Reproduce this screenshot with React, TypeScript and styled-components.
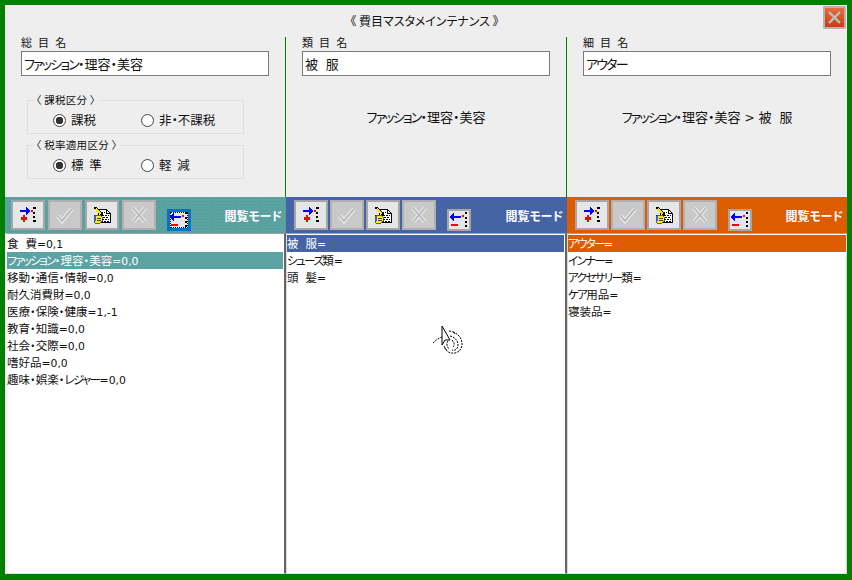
import styled, { createGlobalStyle } from 'styled-components'

const Jp = `"Noto Sans CJK JP", "Liberation Sans", sans-serif`

const GlobalStyle = createGlobalStyle`
  html, body {
    margin: 0;
    padding: 0;
    background: #008000;
  }
  * {
    box-sizing: border-box;
  }
`

const columns = [
  {
    label: '総 目 名',
    value: 'ファッション・理容・美容',
    path: '',
    color: '#5ba3a3',
    selected: 1,
    items: ['食  費=0,1', 'ファッション・理容・美容=0,0', '移動・通信・情報=0,0', '耐久消費財=0,0', '医療・保険・健康=1,-1', '教育・知識=0,0', '社会・交際=0,0', '嗜好品=0,0', '趣味・娯楽・レジャー=0,0'],
  },
  {
    label: '類 目 名',
    value: '被  服',
    path: 'ファッション・理容・美容',
    color: '#4464a6',
    selected: 0,
    items: ['被  服=', 'シューズ類=', '頭  髪='],
  },
  {
    label: '細 目 名',
    value: 'アウター',
    path: 'ファッション・理容・美容 > 被  服',
    color: '#dd5c00',
    selected: 0,
    items: ['アウター=', 'インナー=', 'アクセサリー類=', 'ケア用品=', '寝装品='],
  },
]

// the original font has narrow kana and wide latin, so those runs get their own span
const Mixed = ({ text }: { text: string }) => (
  <>
    {text.split(/([\u30A1-\u30FA\u30FC]+|[=0-9,\- >]+)/).map((part, i) => {
      if (/^[\u30A1-\u30FA\u30FC]+$/.test(part)) return <Kana key={i}>{part}</Kana>
      if (/^[=0-9,\- >]+$/.test(part)) return <Latin key={i}>{part}</Latin>
      return part
    })}
  </>
)

const AddIcon = () => (
  <svg width="16" height="16" viewBox="0 0 16 16" shapeRendering="crispEdges">
    <rect x="0" y="3" width="7" height="2" fill="#0000ff" />
    <path d="M6 0h1v1h1v1h1v1h1v2h-1v1h-1v1h-1v1h-1z" fill="#0000ff" />
    <rect x="11" y="3" width="2" height="2" fill="#ff0000" />
    <rect x="13" y="0" width="3" height="2" fill="#000" />
    <rect x="13" y="5" width="2" height="2" fill="#000" />
    <rect x="13" y="9" width="2" height="2" fill="#000" />
    <rect x="13" y="13" width="3" height="2" fill="#000" />
    <rect x="3" y="8" width="2" height="7" fill="#ff0000" />
    <rect x="1" y="10" width="6" height="3" fill="#ff0000" />
  </svg>
)

const CheckIcon = () => (
  <svg width="18" height="18" viewBox="0 0 18 18">
    <path d="M2 10l4 5L16 3" fill="none" stroke="#f2f2f2" strokeWidth="4" />
    <path d="M2 10l4 5L16 3" fill="none" stroke="#b8b8b8" strokeWidth="2" />
  </svg>
)

const EditIcon = () => (
  <svg width="17" height="17" viewBox="0 0 17 17" shapeRendering="crispEdges">
    <path d="M4.5 2.5h8l4 4v9h-12z" fill="#fff" stroke="#000" />
    <path d="M12.5 2.5v4h4" fill="none" stroke="#000" />
    <path d="M7 5h4M8 8h7M9 10h6M8 12h7M7 14h8" stroke="#000" strokeDasharray="2 1" />
    <path d="M0 0h2l7 7-2 2L0 2z" fill="#000" />
    <path d="M2 2l5 5" stroke="#ffe100" strokeWidth="1.5" />
    <path d="M0 8h5l3 2v4l-2 2H1z" fill="#ffee00" stroke="#000" strokeWidth="0.6" />
    <rect x="0" y="9" width="2" height="5" fill="#2f62d0" />
    <path d="M3 11h4M3 13h4" stroke="#000" strokeWidth="0.7" />
  </svg>
)

const CrossIcon = () => (
  <svg width="18" height="18" viewBox="0 0 18 18">
    <path d="M3 2l12 14M15 2L3 16" fill="none" stroke="#f0f0f0" strokeWidth="4" />
    <path d="M3 2l12 14M15 2L3 16" fill="none" stroke="#bdbdbd" strokeWidth="2" />
  </svg>
)

const RemoveIcon = () => (
  <svg width="18" height="18" viewBox="0 0 18 18" shapeRendering="crispEdges">
    <rect x="4" y="5" width="7" height="2" fill="#0000ff" />
    <path d="M4 2h-1v1h-1v1h-1v1h-1v2h1v1h1v1h1v1h1z" fill="#0000ff" />
    <rect x="12" y="4" width="2" height="2" fill="#ff0000" />
    <rect x="15" y="1" width="2" height="2" fill="#000" />
    <rect x="15" y="6" width="2" height="2" fill="#000" />
    <rect x="15" y="10" width="2" height="2" fill="#000" />
    <rect x="15" y="14" width="2" height="2" fill="#000" />
    <rect x="1" y="13" width="7" height="2" fill="#ff0000" />
  </svg>
)

const HandCursor = () => (
  <svg width="36" height="36" viewBox="0 0 36 36">
    <g fill="none" stroke="#000" strokeWidth="1" strokeDasharray="2 1">
      <path d="M3 20c3-3 6-5 9-6" />
      <path d="M19 8c3 0 5 1 6 3" />
      <path d="M23 9c6 2 9 7 9 12 0 6-5 10-10 9-4 0-6-3-8-6" />
      <path d="M20 13c5 1 8 5 8 9 0 4-3 6-6 5" />
      <path d="M18 18c-2 2-1 6 1 8" />
      <path d="M22 17c2 2 3 5 1 7" />
      <path d="M14 23l3 5" />
    </g>
    <path d="M12 3v19l3-5 5 0z" fill="#fff" stroke="#000" />
  </svg>
)

export default function App() {
  return (
    <>
      <GlobalStyle />
      <Window>
        <TitleBar>
          《 費目マスタメインテナンス 》
          <CloseButton aria-label="閉じる">
            <svg width="15" height="15" viewBox="0 0 15 15">
              <path d="M2 2l11 11M13 2L2 13" stroke="#b4c3c8" strokeWidth="2.4" />
            </svg>
          </CloseButton>
        </TitleBar>
        <Columns>
          {columns.map((col, i) => (
            <Column key={col.label}>
              <FormPanel $last={i === 2}>
                <FieldLabel>{col.label}</FieldLabel>
                <NameInput><Mixed text={col.value} /></NameInput>
                {i === 0 ? (
                  <Groups>
                    <Group>
                      <Legend>〈 課税区分 〉</Legend>
                      <RadioItem><Radio $on />課税</RadioItem>
                      <RadioItem><Radio />非・不課税</RadioItem>
                    </Group>
                    <Group>
                      <Legend>〈 税率適用区分 〉</Legend>
                      <RadioItem><Radio $on />標 準</RadioItem>
                      <RadioItem><Radio />軽 減</RadioItem>
                    </Group>
                  </Groups>
                ) : (
                  <PathText><Mixed text={col.path} /></PathText>
                )}
              </FormPanel>
              <Toolbar $color={col.color} $first={i === 0}>
                <ToolButton><AddIcon /></ToolButton>
                <ToolButton $disabled><CheckIcon /></ToolButton>
                <ToolButton><EditIcon /></ToolButton>
                <ToolButton $disabled><CrossIcon /></ToolButton>
                <RemoveButton $active={i === 0}><RemoveIcon /></RemoveButton>
                <ModeText>閲覧モード</ModeText>
              </Toolbar>
              <List $first={i === 0} $last={i === 2}>
                {col.items.map((item, n) => (
                  <Row key={item} $bg={n === col.selected ? col.color : undefined}>
                    <Mixed text={item} />
                  </Row>
                ))}
                {i === 1 && <CursorWrap><HandCursor /></CursorWrap>}
              </List>
            </Column>
          ))}
        </Columns>
      </Window>
    </>
  )
}

const Window = styled.div`
  width: 852px;
  height: 580px;
  border: solid #008000;
  border-width: 5px 5px 6px 5px;
  background: #eeeeee;
  display: flex;
  flex-direction: column;
  font-family: ${Jp};
  font-feature-settings: 'palt';
  color: #111;
  overflow: hidden;
`

const Kana = styled.span`
  letter-spacing: -0.14em;
`

const Latin = styled.span`
  font-family: "DejaVu Sans", sans-serif;
  font-size: 0.94em;
`

const TitleBar = styled.div`
  height: 32px;
  flex: none;
  position: relative;
  text-align: center;
  font-size: 12px;
  line-height: 32px;
  padding-right: 3px;
`

const CloseButton = styled.button`
  position: absolute;
  top: 1px;
  right: 1px;
  width: 23px;
  height: 23px;
  padding: 0;
  display: flex;
  align-items: center;
  justify-content: center;
  border: 2px solid #b4b4b4;
  border-radius: 1px;
  background: linear-gradient(#ee6a3c, #c93c12);
`

const Columns = styled.div`
  flex: 1;
  min-height: 0;
  display: grid;
  grid-template-columns: 281px 281px 280px;
`

const Column = styled.div`
  display: flex;
  flex-direction: column;
  min-width: 0;
`

const FormPanel = styled.div<{ $last: boolean }>`
  height: 160px;
  flex: none;
  padding-left: 16px;
  border-right: ${p => (p.$last ? 'none' : '1px solid #008000')};
  display: flex;
  flex-direction: column;
`

const FieldLabel = styled.div`
  height: 14px;
  font-size: 11px;
  line-height: 11px;
  letter-spacing: 0.8px;
  word-spacing: 2px;
`

const NameInput = styled.div`
  width: 248px;
  height: 25px;
  border: 1px solid #7a7a7a;
  background: #fff;
  font-size: 13px;
  line-height: 23px;
  padding-left: 2px;
  white-space: pre;
`

const Groups = styled.div`
  margin: 24px 0 0 6px;
  display: flex;
  flex-direction: column;
  gap: 11px;
`

const Group = styled.div`
  position: relative;
  width: 217px;
  height: 34px;
  border: 1px solid #dedede;
  display: grid;
  grid-template-columns: 88px 1fr;
  padding: 12px 0 0 25px;
`

const Legend = styled.span`
  position: absolute;
  top: -8px;
  left: 5px;
  padding: 0 3px;
  background: #eeeeee;
  font-size: 10.5px;
  line-height: 14px;
  letter-spacing: 0.3px;
`

const RadioItem = styled.div`
  display: flex;
  align-items: center;
  gap: 5px;
  font-size: 12.5px;
  line-height: 14px;
  height: 14px;
  word-spacing: 3px;
`

const Radio = styled.span<{ $on?: boolean }>`
  width: 13px;
  height: 13px;
  border-radius: 50%;
  border: 1px solid #444;
  background: ${p => (p.$on ? 'radial-gradient(circle, #333 0 3.5px, #fff 4px)' : '#fff')};
  flex: none;
`

const PathText = styled.div`
  width: 248px;
  margin-top: 33px;
  text-align: center;
  font-size: 13px;
  line-height: 16px;
  white-space: pre;
`

const Toolbar = styled.div<{ $color: string; $first: boolean }>`
  height: 36px;
  flex: none;
  background-color: ${p => p.$color};
  background-image: ${p => (p.$first ? 'radial-gradient(rgba(0, 0, 0, 0.07) 1px, transparent 1px)' : 'none')};
  background-size: 3px 3px;
  display: flex;
  align-items: flex-start;
  gap: ${p => (p.$first ? 3 : 2)}px;
  padding: 3px 4px 0 ${p => (p.$first ? 6 : 8)}px;
`

const ToolButton = styled.div<{ $disabled?: boolean }>`
  width: 34px;
  height: 30px;
  border: 2px solid ${p => (p.$disabled ? '#b0b0b0' : '#a6a6a6')};
  background: ${p => (p.$disabled ? '#c9c9c9' : '#e6e6e6')};
  display: flex;
  align-items: center;
  justify-content: center;
  overflow: hidden;
`

const RemoveButton = styled.div<{ $active: boolean }>`
  width: 24px;
  height: 22px;
  margin: 9px 0 0 ${p => (p.$active ? 8 : 9)}px;
  border: ${p => (p.$active ? '3px solid #0a6fc9' : '2px solid #a6a6a6')};
  outline: ${p => (p.$active ? '1px dotted #000' : 'none')};
  outline-offset: -4px;
  background: #e6e6e6;
  display: flex;
  align-items: center;
  justify-content: center;
  overflow: hidden;
`

const ModeText = styled.div`
  margin: 8px 0 0 auto;
  color: #fff;
  font-size: 12px;
  font-weight: 700;
  line-height: 16px;
`

const List = styled.div<{ $first: boolean; $last: boolean }>`
  flex: 1;
  min-height: 0;
  position: relative;
  background: #fff;
  border-top: 1px solid #a0a0a0;
  border-bottom: 1px solid #e3e3e3;
  border-left: ${p => (p.$first ? '2px solid #fff' : '1px solid #d8d8d8')};
  border-right: ${p => (p.$last ? '1px solid #d8d8d8' : '2px solid #666')};
  padding: 1px ${p => (p.$last ? 0 : 1)}px 0 0;
`

const Row = styled.div<{ $bg?: string }>`
  height: 17px;
  line-height: 17px;
  font-size: 11.5px;
  white-space: pre;
  background: ${p => p.$bg ?? 'transparent'};
  color: ${p => (p.$bg ? '#fff' : '#111')};
`

const CursorWrap = styled.div`
  position: absolute;
  left: 143px;
  top: 89px;
  width: 36px;
  height: 36px;
`
